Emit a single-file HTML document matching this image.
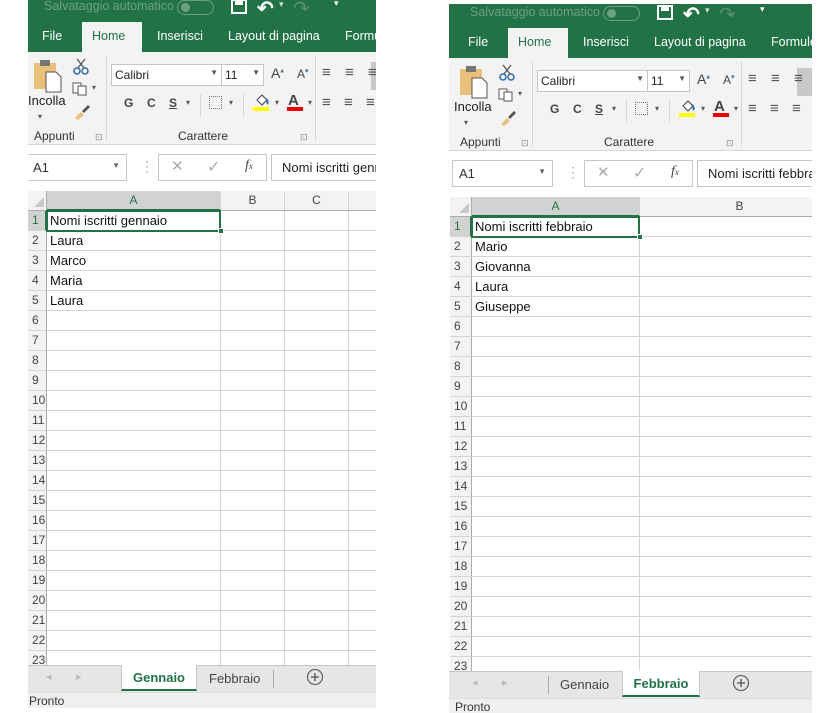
<!DOCTYPE html>
<html><head><meta charset="utf-8"><style>
*{margin:0;padding:0;box-sizing:border-box}
body{width:819px;height:713px;background:#fff;position:relative;overflow:hidden;font-family:"Liberation Sans",sans-serif;font-size:13px;color:#222}
.p{position:absolute;overflow:hidden;background:#fff}
.a{position:absolute;white-space:nowrap}
.box{background:#fff;border:1px solid #c6c6c6}
.cell{position:absolute;border-right:1px solid #d4d4d4;border-bottom:1px solid #d4d4d4;height:20px}
.rh{position:absolute;background:#f3f3f3;border-right:1px solid #ababab;border-bottom:1px solid #d4d4d4;height:20px;font-size:12px;color:#444;padding-left:4px;line-height:19px}
.ch{position:absolute;background:#f3f3f3;border-right:1px solid #d4d4d4;border-bottom:1px solid #ababab;height:20px;text-align:center;font-size:12px;line-height:19px;color:#444}
.ct{position:absolute;font-size:13px;line-height:20px;padding-left:3px;color:#111}
</style></head><body>
<div id="L" class="p" style="left:28px;top:0;width:348px;height:708px"></div>
<div id="R" class="p" style="left:449px;top:0;width:363px;height:713px"></div>
<script>
function panel(el,o){
 var dx=o.dx,dy=o.dy,h='';
 function A(x,y,s,st){h+='<div class="a" style="left:'+(x+dx)+'px;top:'+(y+dy)+'px;'+(st||'')+'">'+s+'</div>';}
 A(0,4,'','width:400px;height:54px;background:#217346');
 A(21,5,'Salvataggio automatico','color:#6f9f82;font-size:12.5px');
 A(154,6,'','width:37px;height:15px;border:1.5px solid #6f9f82;border-radius:8px');
 A(158,9,'','width:9px;height:9px;border-radius:5px;background:#6f9f82');
 A(208,5,'<svg width="16" height="15"><rect x="1" y="1" width="14" height="13" fill="none" stroke="#fff" stroke-width="2"/><rect x="4" y="1" width="8" height="5" fill="#fff"/></svg>');
 A(234,2,'&#x21B6;','color:#fff;font-size:20px;font-weight:bold');
 A(256,5,'▾','color:#ddd;font-size:9px');
 A(270,2,'&#x21B7;','color:#5a8e6e;font-size:20px');
 A(311,4,'▾','color:#fff;font-size:9px');
 A(59,28,'','width:60px;height:30px;background:#f3f3f3');
 A(19,35,'File','color:#fff;font-size:12.5px');
 A(69,35,'Home','color:#217346;font-size:12.5px');
 A(134,35,'Inserisci','color:#fff;font-size:12.5px');
 A(205,35,'Layout di pagina','color:#fff;font-size:12.5px');
 A(322,35,'Formule','color:#fff;font-size:12.5px');
 A(0,58,'','width:400px;height:93px;background:#f3f3f3;border-bottom:1px solid #d6d6d6');
 A(10,65,'<svg width="32" height="34"><rect x="1" y="4" width="22" height="26" fill="#e8c078"/><rect x="7" y="1" width="10" height="6" fill="#777"/><path d="M13 13h10l5 5v15H13z" fill="#fff" stroke="#555"/></svg>');
 A(49,64,'<svg width="18" height="18"><circle cx="5" cy="13" r="3" fill="none" stroke="#2b6cb0" stroke-width="1.5"/><circle cx="13" cy="13" r="3" fill="none" stroke="#2b6cb0" stroke-width="1.5"/><path d="M6 10L13 1M12 10L5 1" stroke="#555" stroke-width="1.3"/></svg>');
 A(49,88,'<svg width="16" height="14"><rect x="1" y="1" width="8" height="10" fill="#fff" stroke="#555"/><rect x="6" y="4" width="8" height="9" fill="#fff" stroke="#555"/></svg>');
 A(69,89,'▾','font-size:8px;color:#555');
 A(50,110,'<svg width="18" height="16"><path d="M2 14l6-6 3 3-6 5z" fill="#e8c078"/><path d="M9 7l6-6 2 2-6 6z" fill="#555"/></svg>');
 A(5,99,'Incolla','font-size:13px;color:#222');
 A(15,118,'▾','font-size:8px;color:#555');
 A(11,135,'Appunti','font-size:12px;color:#333');
 A(72,138,'⊡','font-size:9px;color:#888');
 A(83,62,'','width:1px;height:84px;background:#d6d6d6');
 A(88,70,'<div class="box" style="width:111px;height:22px;font-size:12px;padding:3px 3px">Calibri<span style="position:absolute;right:4px;top:4px;font-size:8px;color:#555">▼</span></div>');
 A(198,70,'<div class="box" style="width:43px;height:22px;font-size:12px;padding:3px 3px">11<span style="position:absolute;right:4px;top:4px;font-size:8px;color:#555">▼</span></div>');
 A(248,71,'A<sup style="font-size:7px;color:#2b6cb0">▴</sup>','font-size:14px;color:#444');
 A(274,73,'A<sup style="font-size:7px;color:#2b6cb0">▾</sup>','font-size:12px;color:#444');
 A(101,102,'G','font-weight:bold;font-size:12px;color:#444');
 A(124,102,'C','font-weight:bold;font-size:12px;color:#444');
 A(146,102,'<u>S</u>','font-weight:bold;font-size:12px;color:#444');
 A(163,104,'▾','font-size:8px;color:#555');
 A(177,100,'','width:1px;height:22px;background:#d6d6d6');
 A(186,102,'<div style="width:13px;height:13px;border:1px dotted #777"></div>');
 A(206,104,'▾','font-size:8px;color:#555');
 A(220,100,'','width:1px;height:22px;background:#d6d6d6');
 A(231,99,'<svg width="16" height="14"><path d="M3 7l5-5 5 5-5 5z" fill="#fff" stroke="#444"/><path d="M12 6c2 2 2 4 1 5" stroke="#2b6cb0" stroke-width="2" fill="none"/></svg>');
 A(230,113,'','width:16px;height:4px;background:#ffff00');
 A(252,104,'▾','font-size:8px;color:#555');
 A(265,98,'A','font-size:15px;color:#444;font-weight:bold');
 A(264,113,'','width:16px;height:4px;background:#e00');
 A(285,104,'▾','font-size:8px;color:#555');
 A(155,135,'Carattere','font-size:12px;color:#333');
 A(277,138,'⊡','font-size:9px;color:#888');
 A(292,62,'','width:1px;height:84px;background:#d6d6d6');
 A(348,68,'','width:22px;height:28px;background:#c8c8c8');
 for(var i=0;i<3;i++){A(299+i*23,70,'≡','font-size:15px;color:#555');A(299+i*22,100,'≡','font-size:15px;color:#555');}
 A(0,151,'','width:400px;height:46px;background:#fff');
 A(3,160,'<div class="box" style="width:101px;height:27px;font-size:13px;padding:5px 6px;color:#333">A1<span style="position:absolute;right:7px;top:7px;font-size:8px;color:#666">▼</span></div>');
 A(117,164,'⋮','color:#aaa;font-size:14px');
 A(135,160,'<div class="box" style="width:109px;height:27px"></div>');
 A(148,163,'✕','color:#aaa;font-size:15px');
 A(184,163,'✓','color:#aaa;font-size:16px');
 A(222,164,'<i>f</i><span style="font-size:9px"><i>x</i></span>','font-family:Liberation Serif;font-size:14px;color:#444');
 A(248,160,'<div class="box" style="width:200px;height:27px;font-size:13px;padding:5px 10px;color:#222">'+o.fx+'</div>');
 var gx=o.gx, rw=o.rw, cols=o.cols, top=197;
 A(gx,top,'','width:'+rw+'px;height:20px;background:#f3f3f3;border-right:1px solid #ababab;border-bottom:1px solid #ababab');
 A(gx+rw-14,top+5,'<svg width="12" height="12"><path d="M11 1V11H1z" fill="#c8c8c8"/></svg>');
 var x=gx+rw;
 for(var c=0;c<cols.length;c++){
  var st=c==0?'background:#d2d2d2;color:#217346;border-bottom:2px solid #217346':'';
  h+='<div class="ch" style="left:'+(x+dx)+'px;top:'+(top+dy)+'px;width:'+cols[c][1]+'px;'+st+'">'+cols[c][0]+'</div>';
  x+=cols[c][1];
 }
 for(var r=0;r<23;r++){
  var y=top+20+r*20;
  var st=r==0?'background:#d2d2d2;color:#217346;border-right:2px solid #217346':'';
  h+='<div class="rh" style="left:'+(gx+dx)+'px;top:'+(y+dy)+'px;width:'+rw+'px;'+st+'">'+(r+1)+'</div>';
  x=gx+rw;
  for(var c=0;c<cols.length;c++){h+='<div class="cell" style="left:'+(x+dx)+'px;top:'+(y+dy)+'px;width:'+cols[c][1]+'px"></div>';x+=cols[c][1];}
  if(o.data[r])h+='<div class="ct" style="left:'+(gx+rw+dx)+'px;top:'+(y+dy)+'px">'+o.data[r]+'</div>';
 }
 var ax=gx+rw;
 A(ax-1,216,'','width:'+(cols[0][1]+1)+'px;height:22px;border:2px solid #217346');
 A(ax+cols[0][1]-3,234,'','width:6px;height:6px;background:#217346;border:1px solid #fff');
 A(0,671,'','width:400px;height:27px;background:#e6e6e6;border-top:1px solid #c6c6c6');
 A(23,676,'◂','color:#bbb;font-size:11px');A(53,676,'▸','color:#bbb;font-size:11px');
 A(o.sep,676,'','width:1px;height:18px;background:#aaa');
 var t=o.tabs;
 A(t.ax,671,'','width:'+t.aw+'px;height:26px;background:#fff;border-bottom:2px solid #217346;border-left:1px solid #c6c6c6;border-right:1px solid #c6c6c6');
 A(t.ax,676,t.active,'width:'+t.aw+'px;text-align:center;font-weight:bold;color:#217346;font-size:13px');
 A(t.ix,677,t.inactive,'color:#444;font-size:13px');
 if(o.sep2)A(o.sep2,676,'','width:1px;height:18px;background:#aaa');
 A(t.px,674,'<svg width="18" height="18"><circle cx="9" cy="9" r="7.5" fill="none" stroke="#666" stroke-width="1.3"/><path d="M9 5v8M5 9h8" stroke="#666" stroke-width="1.6"/></svg>');
 A(0,698,'','width:400px;height:20px;background:#f0f0f0;border-top:1px solid #ddd');
 A(6,700,'Pronto','font-size:12px;color:#333');
 el.innerHTML=h;
}
panel(document.getElementById('L'),{dx:-5,dy:-6,gx:5,rw:19,cols:[['A',174],['B',64],['C',64],['',64]],
 data:['Nomi iscritti gennaio','Laura','Marco','Maria','Laura'],fx:'Nomi iscritti gennaio',
 sep:0,sep2:250,tabs:{ax:98,aw:76,active:'Gennaio',ix:186,inactive:'Febbraio',px:283}});
panel(document.getElementById('R'),{dx:0,dy:0,gx:1,rw:22,cols:[['A',168],['B',200]],
 data:['Nomi iscritti febbraio','Mario','Giovanna','Laura','Giuseppe'],fx:'Nomi iscritti febbraio',
 sep:99,tabs:{ax:173,aw:78,active:'Febbraio',ix:111,inactive:'Gennaio',px:283}});
</script>
</body></html>
